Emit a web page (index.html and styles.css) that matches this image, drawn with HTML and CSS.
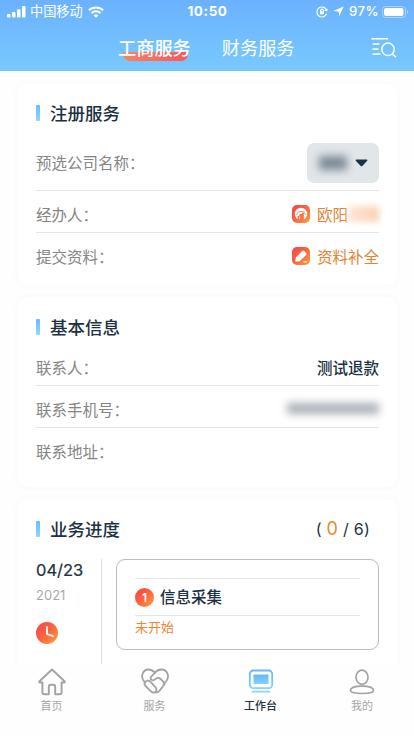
FILE: index.html
```html
<!DOCTYPE html>
<html lang="zh-CN">
<head>
<meta charset="utf-8">
<meta name="viewport" content="width=device-width, initial-scale=1">
<title>工作台</title>
<link rel="stylesheet" href="styles.css">
</head>
<body>
<svg class="defs" width="0" height="0" aria-hidden="true">
  <defs>
    <linearGradient id="warm" x1="0" y1="0" x2="1" y2="1"><stop offset="0" stop-color="#f5434a"/><stop offset=".5" stop-color="#fa6440"/><stop offset="1" stop-color="#ffa23f"/></linearGradient>
    <linearGradient id="sky" x1="0" y1="0" x2="0" y2="1"><stop offset="0" stop-color="#69b4fb"/><stop offset="1" stop-color="#7fd5fb"/></linearGradient>
  </defs>
</svg>
<div class="app">
  <header class="header">
    <div class="status">
      <div class="status-left">
        <svg width="19" height="12" viewBox="0 0 19 12" fill="#fff"><rect x="0" y="8" width="3.5" height="3.500" rx="1"/><rect x="5" y="6" width="3.5" height="5.500" rx="1"/><rect x="10" y="3.2" width="3.5" height="8.300" rx="1"/><rect x="15" y="0" width="3.5" height="11.500" rx="1"/></svg>
        <span class="carrier">中国移动</span>
        <svg width="16" height="12" viewBox="0 0 16 12" fill="none" stroke="#fff" stroke-width="2"><path d="M.8 4.3a10.4 10.4 0 0 1 14.4 0M3.4 7.2a6.6 6.6 0 0 1 9.2 0"/><path d="M5.6 9.4a3.5 3.5 0 0 1 4.8 0L8 11.8z" fill="#fff" stroke="none"/></svg>
      </div>
      <span class="clock">10:50</span>
      <div class="status-right">
        <svg width="12" height="12" viewBox="0 0 12 12" fill="none" stroke="#fff" stroke-width="1.2"><path d="M10.6 4.2A5 5 0 1 0 10.6 7.8M9 4.1l1.8.4.5-1.7"/><path d="M4.6 5.4V4.5a1.4 1.4 0 0 1 2.8 0v.9"/><rect x="4" y="5.3" width="4" height="3" fill="#fff" stroke="none"/></svg>
        <svg width="11" height="11" viewBox="0 0 11 11"><path d="M10.6.4L6.2 10.4 5.6 5.6.4 5z" fill="#fff"/></svg>
        <span class="percent">97%</span>
        <svg width="27" height="12" viewBox="0 0 27 12"><rect x=".5" y=".5" width="23" height="11" rx="3.2" fill="none" stroke="#fff" stroke-opacity=".4"/><rect x="2" y="2" width="19.5" height="8" rx="2" fill="#fff"/><path d="M25 4v4c1.6-.5 1.6-3.500 0-4z" fill="#fff" fill-opacity=".5"/></svg>
      </div>
    </div>
    <nav class="tabs">
      <span class="tab tab-active">工商服务</span>
      <span class="tab">财务服务</span>
      <svg class="search" width="26" height="21" viewBox="0 0 26 21" fill="none" stroke="#fff" stroke-width="1.5"><path d="M.5 1.700h16.500M1.500 7h7M1.500 12h6M1.500 17h8"/><circle cx="17" cy="12.300" r="6.200"/><path d="M21.400 16.800l3.600 3.400"/></svg>
    </nav>
  </header>

  <main class="content">
    <section class="card card-register">
      <h2 class="title">注册服务</h2>
      <div class="row row-select">
        <span class="label">预选公司名称：</span>
        <div class="select"><i class="masked masked-company"></i><svg width="13" height="8" viewBox="0 0 13 8"><path d="M1.200.5h10.600q1 .3.400 1.200L7.300 6.900q-.8.700-1.600 0L.8 1.700Q.2.800 1.200.5z" fill="#173347"/></svg></div>
      </div>
      <div class="row">
        <span class="label">经办人：</span>
        <div class="action">
          <svg width="18" height="18" viewBox="0 0 18 18"><rect width="18" height="18" rx="5" fill="url(#warm)"/><circle cx="9" cy="9" r="6.200" fill="#fff"/><path d="M4.400 10a4.700 4.700 0 0 1 9.200 0" fill="none" stroke="#fa7048" stroke-width=".8"/><path d="M5.700 15.500v-4.600l1.800-.3.400-1.600h2l.5-1.200h1.400v7.700z" fill="#fb703f"/><path d="M7.700 11.500v2.700" stroke="#fff" stroke-width=".8"/></svg>
          <span>欧阳</span><i class="masked masked-name"></i>
        </div>
      </div>
      <div class="row row-last">
        <span class="label">提交资料：</span>
        <div class="action">
          <svg width="18" height="18" viewBox="0 0 18 18"><rect width="18" height="18" rx="5" fill="url(#warm)"/><path d="M3.300 14.700l.5-4.300 6.400-6.300q1-1 2 0l1.900 1.900q1 1 0 2l-6.400 6.300z" fill="#fff"/><path d="M11.300 14.800h3.500" stroke="#fff" stroke-width="1"/></svg>
          <span>资料补全</span>
        </div>
      </div>
    </section>

    <section class="card card-basic">
      <h2 class="title">基本信息</h2>
      <div class="row row-first"><span class="label">联系人：</span><span class="value">测试退款</span></div>
      <div class="row"><span class="label">联系手机号：</span><i class="masked masked-phone"></i></div>
      <div class="row row-last"><span class="label">联系地址：</span></div>
    </section>

    <section class="card card-progress">
      <div class="progress-head">
        <h2 class="title">业务进度</h2>
        <div class="count">( <b>0</b> / 6)</div>
      </div>
      <div class="timeline">
        <div class="when">
          <span class="date">04/23</span>
          <span class="year">2021</span>
          <svg width="22" height="22" viewBox="0 0 22 22"><circle cx="11" cy="11" r="11" fill="url(#warm)"/><path d="M11 5v7l6 2.200" fill="none" stroke="#fff" stroke-width="1.800" stroke-linecap="round" stroke-linejoin="round"/></svg>
        </div>
        <div class="step">
          <div class="step-name"><span class="badge">1</span><span class="step-text">信息采集</span></div>
          <span class="state">未开始</span>
        </div>
      </div>
    </section>
  </main>

  <nav class="tabbar">
    <div class="item">
      <svg width="28" height="28" viewBox="0 0 28 28" fill="none" stroke="#a3a3a3" stroke-width="1.900" stroke-linejoin="round"><path d="M14 1.500L1.500 13.200q-.8 1.300.6 1.300h2.300v9.700q0 2 2 2h4.400v-7.400q0-2.100 2.100-2.100h2.200q2.100 0 2.100 2.100v7.400h4.400q2 0 2-2v-9.700h2.300q1.400 0 .6-1.300z"/></svg>
      <span>首页</span>
    </div>
    <div class="item">
      <svg width="28" height="28" viewBox="0 0 28 28" fill="none" stroke="#a3a3a3" stroke-width="1.800" stroke-linejoin="round" stroke-linecap="round"><path d="M3.200 13.700C-.8 9 1.500 1.500 7.500 1.500c3 0 4.600 1.100 6.400 3.200 1.900-2.100 3.700-3.200 6.600-3.200 6.200 0 8.400 7.600 4.500 12l-2.600 2.700"/><path d="M13.900 4.700l-4 4.300c-1.200 2.700 1.400 4 3.400 2.800l3.300-2c1.800-.2 2.300.5 3.400 1.500l3.200 3.400q.8 1 0 2l-5 6.400c-1.200 1.300-2.200 1.700-4 1.200"/><path d="M4.200 14.100c1.400-1.700 3.500-2 5.100-.4l5.300 5.700c1.700 2 .8 4.700-1.400 5.100-1.700.3-2.700-.5-3.900-1.700L4.500 18c-1.200-1.300-1.300-2.700-.3-3.900z"/></svg>
      <span>服务</span>
    </div>
    <div class="item item-active">
      <svg width="28" height="28" viewBox="0 0 28 28"><rect x="2.800" y="2.500" width="22.400" height="17.600" rx="3.500" fill="none" stroke="url(#sky)" stroke-width="1.800"/><rect x="6.500" y="6.500" width="15" height="9.500" rx=".8" fill="url(#sky)"/><path d="M5.500 23.700h17" stroke="#8dd3fc" stroke-width="1.700" stroke-linecap="round"/></svg>
      <span>工作台</span>
    </div>
    <div class="item">
      <svg width="28" height="28" viewBox="0 0 28 28" fill="none" stroke="#a3a3a3" stroke-width="1.700"><ellipse cx="14" cy="9.200" rx="6" ry="7.100"/><path d="M2.500 22.500c0-3 5-4.400 11.500-4.400s11.500 1.400 11.500 4.400c0 4-23 4-23 0z"/></svg>
      <span>我的</span>
    </div>
  </nav>
</div>
</body>
</html>
```

FILE: styles.css
```css
* { box-sizing: border-box; }

body {
  margin: 0;
  background: #fefefe;
  color: #1b3040;
  font-family: "Noto Sans CJK SC", sans-serif;
}

svg { display: block; flex: none; }
.defs { position: absolute; }

.app {
  display: flex;
  flex-direction: column;
  height: 736px;
  overflow: hidden;
}

.header {
  flex: none;
  height: 71px;
  background: linear-gradient(#6bb1fe, #78c9fe);
  color: #fff;
}

.status {
  display: grid;
  grid-template-columns: 1fr auto 1fr;
  align-items: center;
  height: 23px;
  padding: 0 5px 0 7px;
  font-size: 13.2px;
  line-height: 23px;
}
.status-left, .status-right { display: flex; align-items: center; }
.status-left { gap: 5px; }
.carrier { margin-left: -1px; line-height: 21px; padding-bottom: 2px; }
.status-right { justify-content: flex-end; gap: 5px; }
.clock { font: 700 13.5px/23px Inter, sans-serif; letter-spacing: .6px; margin-left: -1px; }
.percent { font: 500 13.2px/23px Inter, sans-serif; letter-spacing: .4px; margin-right: -2px; }

.tabs {
  display: flex;
  align-items: center;
  height: 48px;
  padding-left: 118px;
  gap: 31px;
}
.tab {
  position: relative;
  z-index: 0;
  font-size: 18.2px;
  font-weight: 400;
  line-height: 28px;
}
.tab-active { font-weight: 500; }
.tab-active::after {
  content: "";
  position: absolute;
  z-index: -1;
  left: 5px;
  bottom: 0;
  width: 65px;
  height: 9px;
  border-radius: 2px 2px 7px 7px;
  background: linear-gradient(90deg, #fa8267, #f8575f);
}
.search { margin: 0 17px 0 auto; }

.content {
  flex: 1;
  display: flex;
  flex-direction: column;
  gap: 12px;
  min-height: 0;
  overflow: hidden;
  padding: 13px 17px 0 18px;
}

.card {
  flex: none;
  padding: 15px 18px 0;
  border-radius: 9px;
  background: #fff;
  box-shadow: 0 0 8px rgba(0, 0, 0, .03);
}
.card-register { height: 201px; padding-top: 14px; }
.card-basic { height: 190px; }
.card-progress { height: 230px; }

.title {
  display: flex;
  align-items: center;
  gap: 10px;
  height: 30px;
  margin: 0;
  font-size: 17.5px;
  font-weight: 500;
  line-height: 30px;
}
.title::before {
  content: "";
  width: 4px;
  height: 16px;
  border-radius: 1px;
  background: linear-gradient(#6fb7fd, #87dcfc);
}

.row {
  display: flex;
  align-items: center;
  justify-content: space-between;
  height: 42px;
  padding-top: 4px;
  border-bottom: 1px solid #e3e5e6;
  font-size: 15.5px;
}
.row-select { height: 63px; padding-top: 8px; }
.row-select .label { padding-bottom: 2px; }
.row-first { height: 44px; padding-top: 6px; }
.row-last { border-bottom: 0; }
.label { color: #858585; font-feature-settings: "palt"; }
.value { font-weight: 500; }
.action { display: flex; align-items: center; color: #df8434; }
.action svg { margin-right: 7px; }

.select {
  display: flex;
  align-items: center;
  justify-content: flex-end;
  gap: 8px;
  width: 72px;
  height: 40px;
  padding-right: 11px;
  border-radius: 7px;
  background: #e1e6e9;
}

.masked { display: block; }
.masked-company { width: 28px; height: 14px; background: #7c8995; filter: blur(4px); }
.masked-name { width: 31px; height: 16px; background: linear-gradient(90deg, #fde6d6, #fad1b2); filter: blur(3px); }
.masked-phone { width: 92px; height: 11px; background: #a9b0b7; filter: blur(4px); }

.progress-head { display: flex; align-items: center; justify-content: space-between; }
.count { padding-right: 9px; font: 400 16px/30px Inter, sans-serif; letter-spacing: .25px; white-space: pre; }
.count b { color: #e48a31; font-weight: 400; font-size: 18px; }

.timeline { display: flex; margin-top: 15px; }
.when {
  display: flex;
  flex-direction: column;
  width: 66px;
  height: 171px;
  border-right: 1px solid #dedede;
  font-family: Inter, sans-serif;
}
.date { font-size: 16.5px; line-height: 22px; font-weight: 400; -webkit-text-stroke: .2px; }
.year { margin: 5px 0 17px; font-size: 13px; line-height: 19px; color: #a8a8a8; }

.step {
  flex: 1;
  height: 91px;
  margin-left: 14px;
  padding: 18px 18px 0;
  border: 1.5px solid #bcbcbc;
  border-radius: 9px;
}
.step-name {
  display: flex;
  align-items: center;
  gap: 6px;
  height: 38px;
  border: solid #e3e7e8;
  border-width: 1px 0;
  font-size: 15.5px;
  font-weight: 500;
}
.step-text { padding-bottom: 2px; }
.badge {
  width: 19px;
  height: 19px;
  border-radius: 50%;
  background: linear-gradient(135deg, #f5434a, #fa6440 50%, #ffa23f);
  color: #fff;
  font: 600 12px/19px Inter, sans-serif;
  text-align: center;
}
.state { display: block; font-size: 13px; line-height: 21px; color: #ed8535; }

.tabbar {
  flex: none;
  display: grid;
  grid-template-columns: 103px 103px 109px 94px;
  height: 72px;
  padding: 4px 0 0;
  background: #fefefe;
}
.item {
  display: flex;
  flex-direction: column;
  align-items: center;
  font-size: 11px;
  line-height: 18px;
  color: #a6a6a6;
}
.item-active { color: #1b3040; font-weight: 500; }
```
